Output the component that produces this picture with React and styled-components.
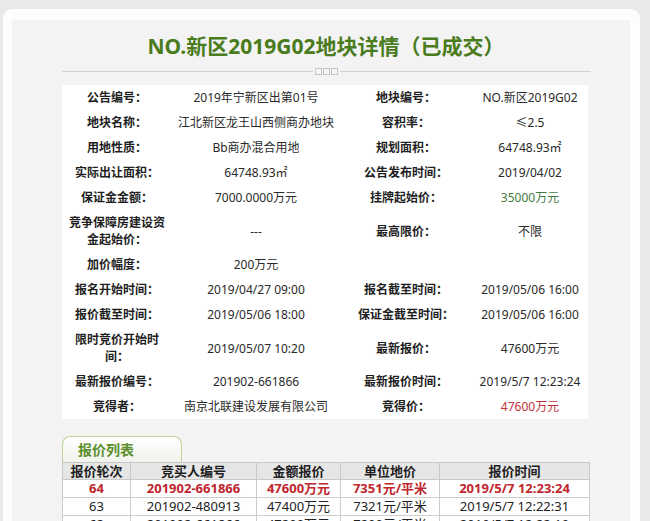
import React from "react";
import styled, { createGlobalStyle } from "styled-components";

const GlobalStyle = createGlobalStyle`
  html, body { margin: 0; padding: 0; }
  body {
    background: #e9e9e9;
    font-family: "Noto Sans", "Noto Sans CJK SC", sans-serif;
    color: #222;
  }
`;

const Page = styled.div`
  height: 521px;
  overflow: hidden;
  padding: 9px 10px 0 3px;
  box-sizing: border-box;
`;

const Card = styled.div`
  width: 637px;
  height: 100%;
  background: #fdfdfd;
  border-radius: 9px 9px 0 0;
  padding: 11px 10px 0 9px;
  box-sizing: border-box;
`;

const Panel = styled.div`
  background: #f3f3f3;
  height: 100%;
  padding: 12px 0 0 50px;
  box-sizing: border-box;
`;

const Title = styled.h1`
  margin: 0 0 0 -40px;
  text-align: center;
  font-family: "Noto Sans", "Noto Sans CJK SC", sans-serif;
  font-size: 21px;
  line-height: 28px;
  font-weight: 700;
  color: #4a7b1c;
`;

const Divider = styled.div`
  display: flex;
  align-items: center;
  width: 529px;
  height: 10px;
  margin: 6px 0 9px;
`;

const Rule = styled.span`
  flex: 1;
  height: 1px;
  background: #d2d2d2;
`;

const Marks = styled.span`
  display: flex;
  gap: 1px;
  padding: 0 2px;
`;

const Square = styled.span`
  width: 5px;
  height: 5px;
  border: 1px solid #c6c6c6;
  background: #f6f6f6;
`;

const InfoGrid = styled.div`
  display: grid;
  grid-template-columns: 110px 168px 132px 116px;
  width: 526px;
  background: #fff;
`;

const Cell = styled.div`
  display: flex;
  align-items: center;
  justify-content: center;
  text-align: center;
  padding: 4px 4px;
  font-size: 12px;
  line-height: 17px;
  word-break: break-all;
  font-weight: ${(p) => (p.$label ? 700 : 400)};
  color: ${(p) =>
    p.$tone === "green" ? "#3f7a3f" : p.$tone === "red" ? "#c2323a" : p.$label ? "#1e1e1e" : "#2a2a2a"};
`;

const Tab = styled.div`
  width: 120px;
  height: 26px;
  margin-top: 17px;
  border: 1px solid #bcd39c;
  border-bottom: none;
  border-radius: 8px 8px 0 0;
  background: linear-gradient(#ffffff, #f1f3ec);
  padding-left: 15px;
  box-sizing: border-box;
  font-size: 14px;
  line-height: 26px;
  font-weight: 700;
  color: #5b8f2c;
`;

const BidTable = styled.table`
  border-collapse: collapse;
  width: 527px;
  table-layout: fixed;
  background: #fff;
`;

const Th = styled.th`
  height: 16px;
  padding: 0;
  border: 1px solid #c8c8c8;
  background: #e6e6e6;
  font-size: 13px;
  line-height: 16px;
  font-weight: 700;
  color: #1e1e1e;
  text-align: center;
`;

const Td = styled.td`
  height: 17px;
  padding: 0;
  border: 1px solid #cdcdcd;
  font-size: 13px;
  line-height: 17px;
  text-align: center;
  white-space: nowrap;
  font-weight: ${(p) => (p.$hot ? 700 : 400)};
  color: ${(p) => (p.$hot ? "#c0262d" : "#222")};
`;

const rows = [
  [["公告编号："], ["2019年宁新区出第01号"], ["地块编号："], ["NO.新区2019G02"]],
  [["地块名称："], ["江北新区龙王山西侧商办地块"], ["容积率："], ["≤2.5"]],
  [["用地性质："], ["Bb商办混合用地"], ["规划面积："], ["64748.93㎡"]],
  [["实际出让面积："], ["64748.93㎡"], ["公告发布时间："], ["2019/04/02"]],
  [["保证金金额："], ["7000.0000万元"], ["挂牌起始价："], ["35000万元", "green"]],
  [["竞争保障房建设资金起始价："], ["---"], ["最高限价："], ["不限"]],
  [["加价幅度："], ["200万元"], [""], [""]],
  [["报名开始时间："], ["2019/04/27 09:00"], ["报名截至时间："], ["2019/05/06 16:00"]],
  [["报价截至时间："], ["2019/05/06 18:00"], ["保证金截至时间："], ["2019/05/06 16:00"]],
  [["限时竞价开始时间："], ["2019/05/07 10:20"], ["最新报价："], ["47600万元"]],
  [["最新报价编号："], ["201902-661866"], ["最新报价时间："], ["2019/5/7 12:23:24"]],
  [["竞得者："], ["南京北联建设发展有限公司"], ["竞得价："], ["47600万元", "red"]],
];

const bids = [
  ["64", "201902-661866", "47600万元", "7351元/平米", "2019/5/7 12:23:24", true],
  ["63", "201902-480913", "47400万元", "7321元/平米", "2019/5/7 12:22:31", false],
  ["62", "201902-661866", "47200万元", "7290元/平米", "2019/5/7 12:22:10", false],
];

const colWidths = [68, 126, 84, 99, 150];

export default function App() {
  return (
    <>
      <GlobalStyle />
      <Page>
        <Card>
          <Panel>
            <Title>NO.新区2019G02地块详情（已成交）</Title>
            <Divider>
              <Rule />
              <Marks>
                <Square />
                <Square />
                <Square />
              </Marks>
              <Rule />
            </Divider>
            <InfoGrid>
              {rows.map((r, i) =>
                r.map(([text, tone], j) => (
                  <Cell key={`${i}-${j}`} $label={j % 2 === 0} $tone={tone}>
                    {text}
                  </Cell>
                ))
              )}
            </InfoGrid>
            <Tab>报价列表</Tab>
            <BidTable>
              <colgroup>
                {colWidths.map((w, i) => (
                  <col key={i} style={{ width: w }} />
                ))}
              </colgroup>
              <thead>
                <tr>
                  <Th>报价轮次</Th>
                  <Th>竞买人编号</Th>
                  <Th>金额报价</Th>
                  <Th>单位地价</Th>
                  <Th>报价时间</Th>
                </tr>
              </thead>
              <tbody>
                {bids.map((b, i) => (
                  <tr key={i}>
                    {b.slice(0, 5).map((v, j) => (
                      <Td key={j} $hot={b[5]}>
                        {v}
                      </Td>
                    ))}
                  </tr>
                ))}
              </tbody>
            </BidTable>
          </Panel>
        </Card>
      </Page>
    </>
  );
}
